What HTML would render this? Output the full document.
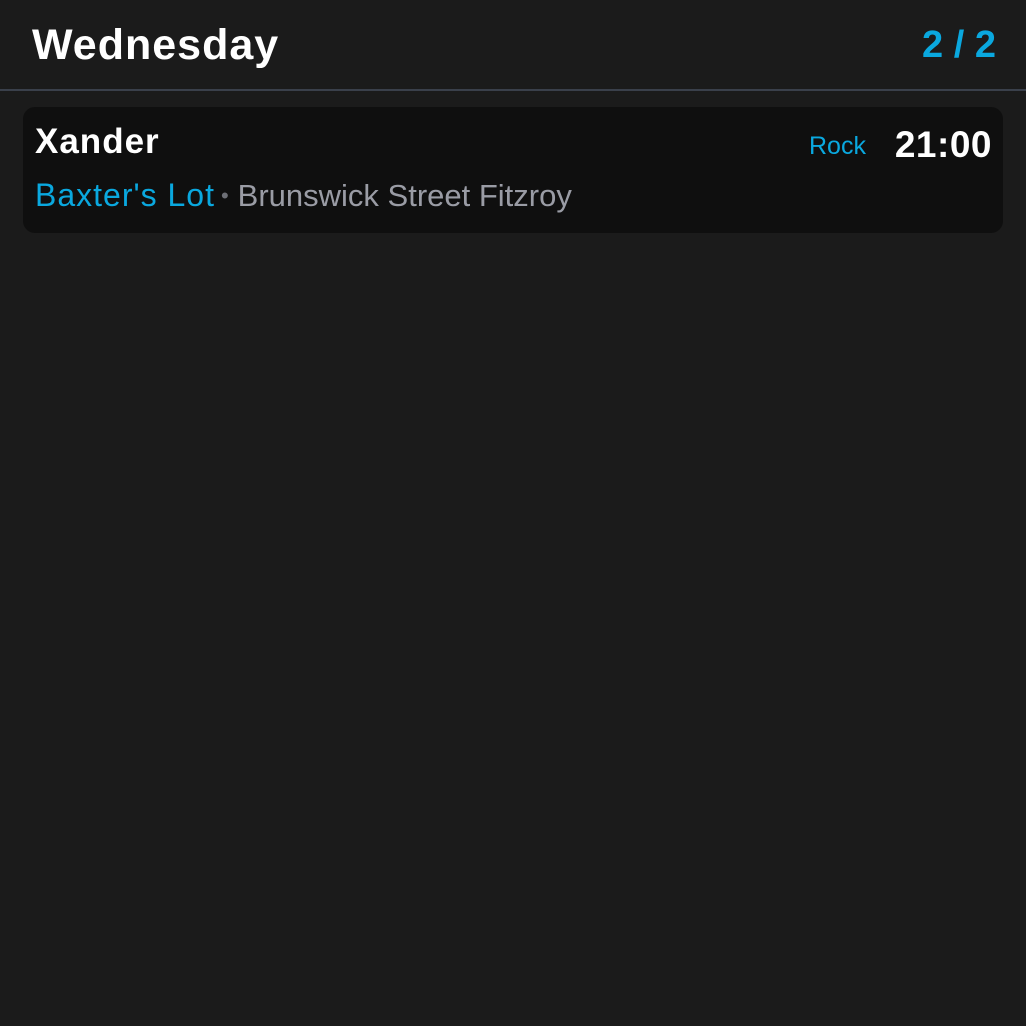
<!DOCTYPE html>
<html><head><meta charset="utf-8"><style>
html,body{margin:0;padding:0;background:#1b1b1b;width:1026px;height:1026px;overflow:hidden;font-family:"Liberation Sans",sans-serif;}
.hdr{position:absolute;left:0;top:0;width:1026px;height:89px;border-bottom:2px solid #3a404b;}
.title{position:absolute;left:32px;top:21px;font-size:43px;font-weight:bold;color:#fff;letter-spacing:1px;}
.cnt{position:absolute;right:30px;top:24px;font-size:38px;font-weight:bold;color:#0aa8df;}
.card{position:absolute;left:23px;top:107px;width:980px;height:126px;background:#0f0f0f;border-radius:12px;}
.name{position:absolute;left:12px;top:15px;font-size:35px;font-weight:bold;color:#fff;letter-spacing:1px;}
.rock{position:absolute;left:786px;top:25px;font-size:25px;color:#0aa8df;}
.time{position:absolute;right:11px;top:17px;font-size:37px;font-weight:bold;color:#fff;letter-spacing:0.5px;}
.loc{position:absolute;left:12px;top:70px;font-size:32px;color:#0aa8df;white-space:nowrap;letter-spacing:1px;}
.loc span{color:#9a9ca5;letter-spacing:0;font-size:31px;}
.loc i{font-style:normal;color:#6d6f76;font-size:22px;margin:0 8px 0 6px;vertical-align:3px;}
</style></head><body>
<div class="hdr"><div class="title">Wednesday</div><div class="cnt">2 / 2</div></div>
<div class="card">
<div class="name">Xander</div>
<div class="rock">Rock</div>
<div class="time">21:00</div>
<div class="loc">Baxter's Lot<i>•</i><span>Brunswick Street Fitzroy</span></div>
</div>
</body></html>
